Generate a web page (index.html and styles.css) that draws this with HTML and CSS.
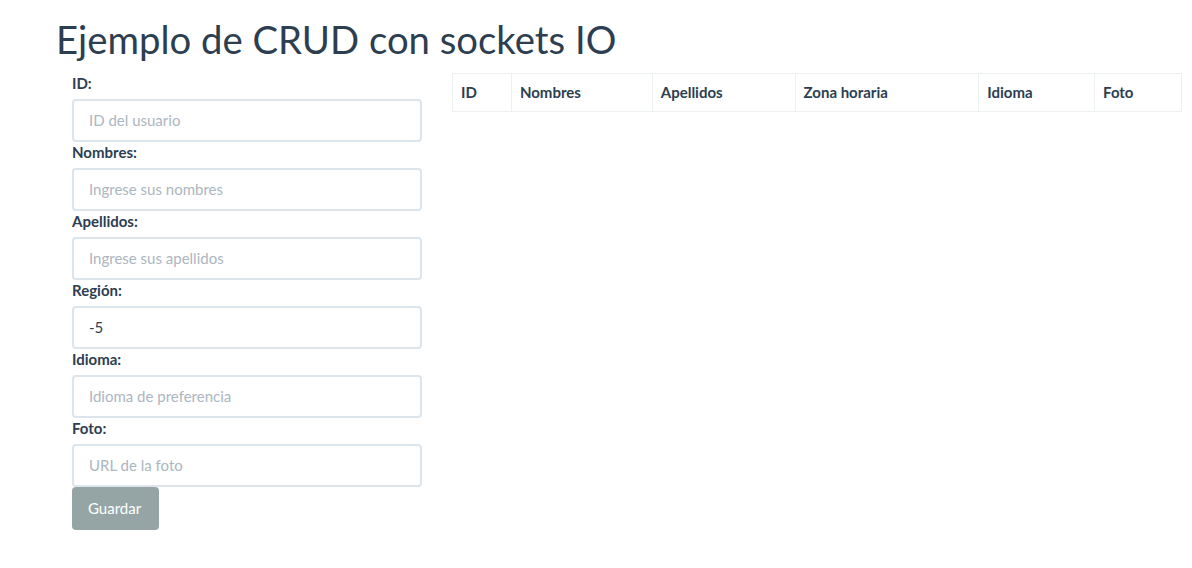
FILE: index.html
```html
<!DOCTYPE html>
<html lang="es">
<head>
<meta charset="utf-8">
<title>Ejemplo de CRUD con sockets IO</title>
<link rel="stylesheet" href="styles.css">
</head>
<body>
<div class="container">
  <h1 class="title">Ejemplo de CRUD con sockets IO</h1>
  <div class="row">
    <form class="form-col">
      <label class="lbl" for="id">ID:</label>
      <input class="ctl" id="id" type="text" placeholder="ID del usuario">
      <label class="lbl" for="nombres">Nombres:</label>
      <input class="ctl" id="nombres" type="text" placeholder="Ingrese sus nombres">
      <label class="lbl" for="apellidos">Apellidos:</label>
      <input class="ctl" id="apellidos" type="text" placeholder="Ingrese sus apellidos">
      <label class="lbl" for="region">Región:</label>
      <input class="ctl" id="region" type="text" value="-5">
      <label class="lbl" for="idioma">Idioma:</label>
      <input class="ctl" id="idioma" type="text" placeholder="Idioma de preferencia">
      <label class="lbl" for="foto">Foto:</label>
      <input class="ctl" id="foto" type="text" placeholder="URL de la foto">
      <button class="btn" type="button">Guardar</button>
    </form>
    <div class="table-col">
      <table class="tbl">
        <thead>
          <tr>
            <th class="c-id">ID</th>
            <th class="c-nom">Nombres</th>
            <th class="c-ape">Apellidos</th>
            <th class="c-zona">Zona horaria</th>
            <th class="c-idi">Idioma</th>
            <th class="c-foto">Foto</th>
          </tr>
        </thead>
        <tbody></tbody>
      </table>
    </div>
  </div>
</div>
</body>
</html>
```
FILE: styles.css
```css
* { box-sizing: border-box; }
html, body {
  margin: 0;
  background: #fff;
  color: #2c3e50;
  font-family: Lato, "Open Sans", "Liberation Sans", sans-serif;
  font-size: 15px;
  line-height: 21px;
}
.container {
  padding: 18px 10px 0 55px;
}
.title {
  margin: 0 0 13px 1px;
  font-size: 38.3px;
  font-weight: 400;
  line-height: 1.1;
  color: #2c3e50;
}
.row {
  display: flex;
  align-items: flex-start;
}
.form-col {
  display: flex;
  flex-direction: column;
  width: 350px;
  margin: 0 0 0 17px;
}
.lbl {
  display: block;
  font-weight: 700;
  line-height: 21px;
  margin-bottom: 5px;
}
.ctl {
  display: block;
  width: 100%;
  height: 43px;
  padding: 9px 15px 11px;
  font-family: inherit;
  font-size: 15px;
  color: #2c3e50;
  background: #fff;
  border: 2px solid #dce4ec;
  border-radius: 4px;
  outline: none;
}
.ctl::placeholder { color: #acb6c0; opacity: 1; }
.btn {
  align-self: flex-start;
  margin-top: 0;
  height: 43px;
  padding: 10px 18px 10px 16px;
  font-family: inherit;
  font-size: 15px;
  line-height: 21px;
  color: #fff;
  background: #95a5a6;
  border: 0;
  border-radius: 4px;
}
.table-col {
  margin-left: 30px;
  width: 730px;
}
.tbl {
  width: 100%;
  border-collapse: collapse;
  border: 1px solid #ecf0f1;
}
.tbl th {
  text-align: left;
  font-weight: 700;
  padding: 8px;
  line-height: 21px;
  border: 1px solid #ecf0f1;
}
.c-id { width: 59px; }
.c-nom { width: 141px; }
.c-ape { width: 143px; }
.c-zona { width: 184px; }
.c-idi { width: 116px; }
.c-foto { width: 87px; }
```
